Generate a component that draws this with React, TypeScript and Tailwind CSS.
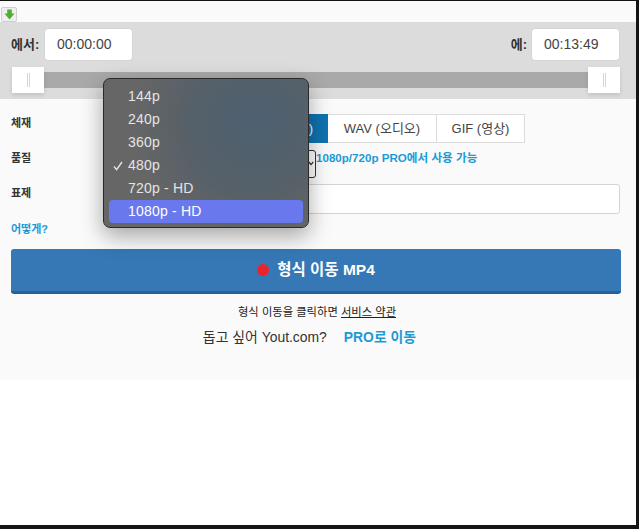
import React from 'react';

const font = { sans: "font-['Liberation_Sans','Noto_Sans_CJK_KR',sans-serif]" };

const qualities = ['144p', '240p', '360p', '480p', '720p - HD', '1080p - HD'];

const SliderHandle = () => (
  <div className="w-8 h-[26px] bg-white shadow-[0_2px_4px_rgba(0,0,0,0.12)] flex items-center justify-center shrink-0 z-10">
    <div className="w-[3px] h-[14px] border-x border-[#d8d8d8]" />
  </div>
);

const TimeBox = ({ value }: { value: string }) => (
  <div className="w-[89px] h-[33px] bg-white rounded-[4px] border border-[#d4d4d4] flex items-center pl-[12px] text-[14px] text-[#444]">
    {value}
  </div>
);

const QualityMenu = () => (
  <div className="absolute left-[103px] top-[77px] w-[206px] h-[150px] rounded-[7px] border border-[#2a2a2a] bg-[radial-gradient(circle_at_74%_30%,#4d6072_0%,#566068_36%,#666666_68%)] shadow-[0_8px_22px_rgba(0,0,0,0.35)] px-[5px] pt-[6px] z-20">
    {qualities.map((q) => (
      <div
        key={q}
        className={`relative h-[23px] rounded-[4px] pl-[19px] flex items-center text-[14px] tracking-[0.2px] ${
          q === '1080p - HD' ? 'bg-[#6a78ee] text-white' : 'text-[#e4e4e4]'
        }`}
      >
        {q === '480p' && (
          <svg className="absolute left-[4px] top-[7px]" width="10" height="10" viewBox="0 0 10 10" fill="none">
            <path d="M1 5.5 L3.6 8.6 L9 1" stroke="#e8e8e8" strokeWidth="1.3" />
          </svg>
        )}
        {q}
      </div>
    ))}
  </div>
);

export default function App() {
  return (
    <div className={`${font.sans} relative w-[639px] h-[529px] bg-white overflow-hidden border-t border-r-[3px] border-b-4 border-[#141414]`}>
      {/* top strip */}
      <div className="h-[21px] bg-[#fafafa] pl-[1px] pt-[6px]">
        <div className="w-[16px] h-[15px] bg-[#efefef] border border-[#cfcfcf] rounded-[2px] flex items-center justify-center">
          <svg width="11" height="11" viewBox="0 0 12 12">
            <path d="M3.5 0.5 H8.5 V5 H11.5 L6 11.5 L0.5 5 H3.5 Z" fill="#4caf32" />
          </svg>
        </div>
      </div>

      {/* trim section */}
      <div className="h-[77px] bg-[#dcdcdc] px-[11px] pt-[6px]">
        <div className="flex items-center justify-between h-[33px] pr-[5px]">
          <div className="flex items-center gap-[5px]">
            <span className="text-[13px] font-bold text-[#333] w-[28px] whitespace-nowrap">에서:</span>
            <TimeBox value="00:00:00" />
          </div>
          <div className="flex items-center gap-[4px]">
            <span className="text-[13px] font-bold text-[#333]">에:</span>
            <TimeBox value="00:13:49" />
          </div>
        </div>
        <div className="flex items-center mt-[6px] ml-[1px] w-[608px]">
          <SliderHandle />
          <div className="flex-1 h-[16px] bg-[#a9a9a9]" />
          <SliderHandle />
        </div>
      </div>

      {/* form */}
      <div className="h-[281px] bg-[#fafafa] px-[11px] relative">
        <div className="flex h-[51px] items-start pt-[15px]">
          <span className="w-[90px] text-[11px] font-bold text-[#333] leading-[18px]">체재</span>
          <div className="ml-[110px] flex h-[29px] text-[13px] text-[#444]">
            <div className="w-[117px] bg-[#0f72b0] text-white flex items-center justify-end pr-[15px]">MP4 (비디오)</div>
            <div className="w-[109px] bg-white border border-l-0 border-[#dcdcdc] flex items-center justify-center">WAV (오디오)</div>
            <div className="w-[88px] bg-white border border-l-0 border-[#dcdcdc] flex items-center justify-center">GIF (영상)</div>
          </div>
        </div>
        <div className="flex h-[34px] items-start">
          <span className="w-[190px] text-[11px] font-bold text-[#333] leading-[16px]">품질</span>
          <div className="w-[115px] h-[28px] border border-[#333] rounded-[3px] bg-white flex items-center justify-end pr-[1px] pb-[1px]">
            <svg width="6" height="5" viewBox="0 0 6 5" fill="none">
              <path d="M0.8 1 L3 3.6 L5.2 1" stroke="#333" strokeWidth="1.2" />
            </svg>
          </div>
          <span className="text-[11.6px] font-bold text-[#1c9ad6] leading-[13px] mt-[1px]">1080p/720p PRO에서 사용 가능</span>
        </div>
        <div className="flex h-[36px] items-start">
          <span className="w-[190px] text-[11px] font-bold text-[#333] leading-[16px] pt-[1px]">표제</span>
          <div className="w-[419px] h-[30px] bg-white border border-[#d4d4d4] rounded-[3px]" />
        </div>
        <div className="text-[11px] font-bold text-[#1c9ad6] leading-[16px] mt-[1px]">어떻게?</div>

        <div className="mt-[12px] h-[45px] w-[610px] bg-[#3578b5] border-b-[3px] border-[#24629c] rounded-[3px] flex items-center justify-center gap-[8px]">
          <span className="w-[12px] h-[12px] rounded-full bg-[#e8262a]" />
          <span className="text-[15.5px] font-bold text-white">형식 이동 MP4</span>
        </div>

        <div className="mt-[10px] text-center text-[11.3px] text-[#222] leading-[16px] pr-[2px]">
          형식 이동을 클릭하면 <span className="underline">서비스 약관</span>
        </div>
        <div className="mt-[8px] flex justify-center items-center gap-[17px] text-[13.9px] leading-[18px] pr-[17px]">
          <span className="text-[#333]">돕고 싶어 Yout.com?</span>
          <span className="font-bold text-[#1c9ad6]">PRO로 이동</span>
        </div>
      </div>

      <QualityMenu />
    </div>
  );
}
